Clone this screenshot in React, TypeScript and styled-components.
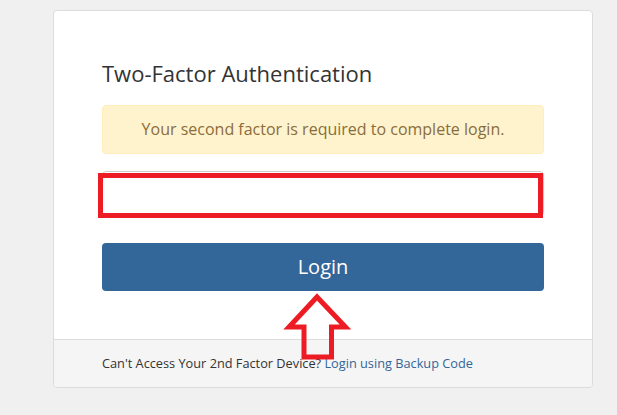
import React from "react";
import styled, { createGlobalStyle } from "styled-components";

const GlobalStyle = createGlobalStyle`
  html, body {
    margin: 0;
    padding: 0;
    background: #f0f0f0;
    font-family: "Open Sans", "Noto Sans", sans-serif;
    color: #333;
  }
  * { box-sizing: border-box; }
`;

const Page = styled.div`
  padding: 10px 0 0 53px;
  min-height: 415px;
`;

const Card = styled.div`
  width: 540px;
  background: #fff;
  border: 1px solid #dcdcdc;
  border-radius: 4px;
  overflow: hidden;
`;

const CardBody = styled.div`
  position: relative;
  padding: 46px 48px 48px;
  display: flex;
  flex-direction: column;
`;

const Title = styled.h3`
  margin: 0 0 16px;
  font-size: 22px;
  line-height: 32px;
  font-weight: 400;
  color: #333;
`;

const Alert = styled.div`
  background: #fff3cd;
  border: 1px solid #ffeeba;
  border-radius: 4px;
  padding: 15px;
  line-height: 17px;
  font-size: 16px;
  color: #8a6d3b;
  text-align: center;
  margin-bottom: 17px;
`;

const FieldWrap = styled.div`
  position: relative;
  margin-bottom: 27px;
`;

const Input = styled.input`
  display: block;
  width: 100%;
  height: 45px;
  border: 1px solid #ccc;
  border-radius: 4px;
  background: #fff;
  font: inherit;
  padding: 0 12px;
  outline: none;
`;

const Highlight = styled.div`
  position: absolute;
  left: -4px;
  top: 2px;
  width: 445px;
  height: 45px;
  border: 5px solid #ed1c24;
`;

const ButtonWrap = styled.div`
  position: relative;
`;

const LoginButton = styled.button`
  display: block;
  width: 100%;
  height: 48px;
  border: none;
  border-radius: 4px;
  background: #336699;
  color: #fff;
  font-family: inherit;
  font-size: 20px;
  line-height: 48px;
  padding: 0;
  cursor: pointer;
`;

const Arrow = styled.svg`
  position: absolute;
  left: 182px;
  top: 50px;
  overflow: visible;
  z-index: 2;
`;

const Footer = styled.div`
  border-top: 1px solid #dcdcdc;
  background: #f5f5f5;
  padding: 15px 48px;
  font-size: 12.75px;
  line-height: 17px;
  color: #333;
`;

const Link = styled.a`
  color: #336699;
  text-decoration: none;
`;

export default function App() {
  return (
    <>
      <GlobalStyle />
      <Page>
        <Card>
          <CardBody>
            <Title>Two-Factor Authentication</Title>
            <Alert>Your second factor is required to complete login.</Alert>
            <FieldWrap>
              <Input type="text" aria-label="Authentication code" />
              <Highlight />
            </FieldWrap>
            <ButtonWrap>
              <LoginButton>Login</LoginButton>
              <Arrow width="70" height="70" viewBox="0 0 70 70">
                <polygon
                  points="33,4 61.5,34 47.5,34 47.5,64 20,64 20,34 5,34"
                  fill="none"
                  stroke="#ed1c24"
                  strokeWidth="5"
                  strokeLinejoin="miter"
                />
              </Arrow>
            </ButtonWrap>
          </CardBody>
          <Footer>
            Can't Access Your 2nd Factor Device?{" "}
            <Link href="#">Login using Backup Code</Link>
          </Footer>
        </Card>
      </Page>
    </>
  );
}
